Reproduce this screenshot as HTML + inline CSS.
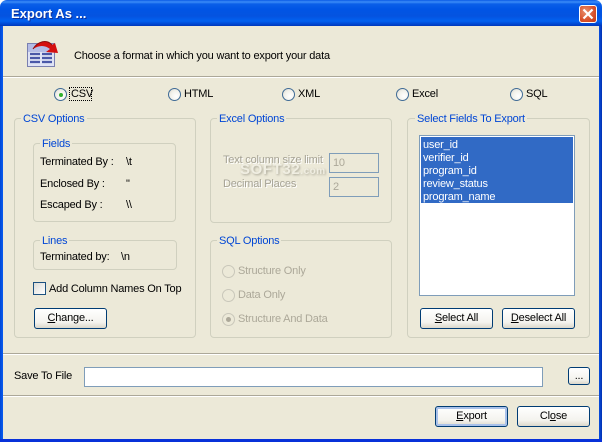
<!DOCTYPE html>
<html>
<head>
<meta charset="utf-8">
<style>
html,body{margin:0;padding:0;background:#fff}
#w{position:relative;width:602px;height:442px;overflow:hidden;font-family:"Liberation Sans",sans-serif;font-size:11px;letter-spacing:-.19px;color:#000;background:#fff}
#w div,#w span.t{position:absolute;box-sizing:border-box}
.t{white-space:nowrap;line-height:14px;height:14px}
.gb{border:1px solid #d0d0bf;border-radius:4px}
.lg{background:#ece9d8;color:#0046d5;padding:0 2px;line-height:14px;height:14px;white-space:nowrap}
.btn{background:linear-gradient(#fff,#f4f3ee 70%,#dcd8cb);border:1px solid #003c74;border-radius:3px;text-align:center;line-height:19px;color:#000;white-space:nowrap}
.inp{background:#fff;border:1px solid #7f9db9}
.dis{color:#aca899}
.ds{color:#a5a294;text-shadow:1px 1px 0 #fff}
.r{width:13px;height:13px;border-radius:50%;border:1px solid #3f6b96;background:radial-gradient(circle at 65% 65%,#fff,#f2f1ea 55%,#d4d2c8)}
.rd{width:13px;height:13px;border-radius:50%;border:1px solid #c9c7ba;background:#ece9d8}
.sep{left:3px;width:596px;height:2px;border-top:1px solid #aca899;border-bottom:1px solid #fff}
u{text-decoration:underline}
</style>
</head>
<body>
<div id="w">
  <!-- title bar -->
  <div style="left:0;top:0;width:602px;height:26px;border-radius:7px 7px 0 0;background:linear-gradient(#0a5ae6 0,#3b8cf7 2px,#0a5fe8 4px,#0055e5 9px,#0453e0 16px,#0261f0 21px,#0040c8 25px,#0038b8 26px)"></div>
  <span class="t" style="left:11px;top:7px;color:#fff;font-size:13px;letter-spacing:0;text-shadow:1px 1px 0 #0f2f9a;font-weight:bold">Export As ...</span>
  <!-- close -->
  <div style="left:579px;top:5px;width:18px;height:18px;border:1px solid #fff;border-radius:3px;background:radial-gradient(circle at 35% 35%,#e8916f,#d8502a 60%,#c23b17)"></div>
  <svg style="position:absolute;left:579px;top:5px" width="18" height="18"><path d="M4.500 4.500L13.500 13.500M13.500 4.500L4.500 13.500" stroke="#fff" stroke-width="2.200"/></svg>
  <!-- side borders -->
  <div style="left:0;top:26px;width:3px;height:416px;background:linear-gradient(90deg,#0047d5,#0a5cf0)"></div>
  <div style="left:599px;top:26px;width:3px;height:416px;background:linear-gradient(90deg,#0a4fe0,#0030b0)"></div>
  <div style="left:0;top:439px;width:602px;height:3px;background:#0831d9"></div>
  <!-- client -->
  <div style="left:3px;top:26px;width:596px;height:413px;background:#ece9d8"></div>

  <!-- header icon -->
  <svg style="position:absolute;left:26px;top:40px" width="34" height="30" viewBox="0 0 34 30">
    <rect x="1.500" y="3.500" width="27" height="23" fill="#dfe3f5" stroke="#7a80b0"/>
    <rect x="2" y="4" width="26" height="8" fill="#b4bce6"/>
    <path d="M4 14h10M16 14h10M4 18h10M16 18h10M4 22h10M16 22h10" stroke="#4a58a8" stroke-width="2.200"/>
    <path d="M7 9C12 1 21 -1 26 5L29 3L32 13L20 12L24 9C19 5 13 5 7 9Z" fill="#d40f0f"/>
    <path d="M7 9C12 1 21 -1 26 5" stroke="#8c0b0b" fill="none"/>
  </svg>
  <span class="t" style="left:74px;top:49px">Choose a format in which you want to export your data</span>
  <div class="sep" style="top:76px"></div>

  <!-- format radios -->
  <div class="r" style="left:54px;top:88px"></div>
  <div style="left:59px;top:93px;width:4px;height:4px;border-radius:50%;background:#31b02e"></div>
  <div style="left:69px;top:87px;width:23px;height:14px;border:1px dotted #000"></div>
  <span class="t" style="left:71px;top:87px">CSV</span>
  <div class="r" style="left:168px;top:88px"></div>
  <span class="t" style="left:184px;top:87px">HTML</span>
  <div class="r" style="left:282px;top:88px"></div>
  <span class="t" style="left:298px;top:87px">XML</span>
  <div class="r" style="left:396px;top:88px"></div>
  <span class="t" style="left:412px;top:87px">Excel</span>
  <div class="r" style="left:510px;top:88px"></div>
  <span class="t" style="left:526px;top:87px">SQL</span>

  <!-- CSV options -->
  <div class="gb" style="left:14px;top:118px;width:182px;height:220px"></div>
  <div class="lg" style="left:21px;top:112px">CSV Options</div>
  <div class="gb" style="left:33px;top:143px;width:143px;height:79px"></div>
  <div class="lg" style="left:40px;top:137px">Fields</div>
  <span class="t" style="left:40px;top:155px">Terminated By :</span>
  <span class="t" style="left:126px;top:155px">\t</span>
  <span class="t" style="left:40px;top:177px">Enclosed By :</span>
  <span class="t" style="left:126px;top:177px">"</span>
  <span class="t" style="left:40px;top:198px">Escaped By :</span>
  <span class="t" style="left:126px;top:198px">\\</span>
  <div class="gb" style="left:33px;top:240px;width:144px;height:30px"></div>
  <div class="lg" style="left:40px;top:234px">Lines</div>
  <span class="t" style="left:40px;top:250px">Terminated by:</span>
  <span class="t" style="left:121px;top:250px">\n</span>
  <div style="left:33px;top:282px;width:13px;height:13px;border:1px solid #1c5180;background:linear-gradient(135deg,#dcdcd7,#fff)"></div>
  <span class="t" style="left:49px;top:282px">Add Column Names On Top</span>
  <div class="btn" style="left:34px;top:308px;width:73px;height:21px"><u>C</u>hange...</div>

  <!-- Excel options -->
  <div class="gb" style="left:210px;top:118px;width:182px;height:105px"></div>
  <div class="lg" style="left:217px;top:112px">Excel Options</div>
  <span class="t" style="left:240px;top:163px;font-size:15px;font-weight:bold;letter-spacing:.6px;color:#f0eee2;text-shadow:1px 1px 2px #a8a596">SOFT32<span style="font-size:10px;letter-spacing:.5px">.com</span></span>
  <span class="t ds" style="left:223px;top:153px">Text column size limit</span>
  <span class="t ds" style="left:223px;top:177px">Decimal Places</span>
  <div class="inp" style="left:329px;top:153px;width:50px;height:20px;background:#ece9d8"></div>
  <span class="t dis" style="left:333px;top:156px">10</span>
  <div class="inp" style="left:329px;top:177px;width:50px;height:20px;background:#ece9d8"></div>
  <span class="t dis" style="left:333px;top:180px">2</span>

  <!-- SQL options -->
  <div class="gb" style="left:210px;top:240px;width:182px;height:98px"></div>
  <div class="lg" style="left:217px;top:234px">SQL Options</div>
  <div class="rd" style="left:222px;top:265px"></div>
  <span class="t dis" style="left:238px;top:264px">Structure Only</span>
  <div class="rd" style="left:222px;top:289px"></div>
  <span class="t dis" style="left:238px;top:288px">Data Only</span>
  <div class="rd" style="left:222px;top:313px"></div>
  <div style="left:226px;top:317px;width:5px;height:5px;border-radius:50%;background:#aca899"></div>
  <span class="t dis" style="left:238px;top:312px">Structure And Data</span>

  <!-- Select fields -->
  <div class="gb" style="left:407px;top:118px;width:183px;height:220px"></div>
  <div class="lg" style="left:415px;top:112px">Select Fields To Export</div>
  <div class="inp" style="left:419px;top:135px;width:156px;height:161px"></div>
  <div style="left:421px;top:137px;width:152px;height:66px;background:#316ac5"></div>
  <span class="t" style="left:423px;top:138px;color:#fff">user_id</span>
  <span class="t" style="left:423px;top:151px;color:#fff">verifier_id</span>
  <span class="t" style="left:423px;top:164px;color:#fff">program_id</span>
  <span class="t" style="left:423px;top:177px;color:#fff">review_status</span>
  <span class="t" style="left:423px;top:190px;color:#fff">program_name</span>
  <div class="btn" style="left:420px;top:308px;width:73px;height:21px"><u>S</u>elect All</div>
  <div class="btn" style="left:502px;top:308px;width:73px;height:21px"><u>D</u>eselect All</div>

  <div class="sep" style="top:353px"></div>
  <span class="t" style="left:14px;top:369px">Save To File</span>
  <div class="inp" style="left:84px;top:367px;width:459px;height:20px"></div>
  <div class="btn" style="left:568px;top:367px;width:22px;height:18px;line-height:17px">...</div>
  <div class="sep" style="top:395px"></div>

  <div class="btn" style="left:435px;top:406px;width:73px;height:21px;box-shadow:inset 0 0 0 2px #a9c1ea"><u>E</u>xport</div>
  <div class="btn" style="left:517px;top:406px;width:73px;height:21px">Cl<u>o</u>se</div>
</div>
</body>
</html>
